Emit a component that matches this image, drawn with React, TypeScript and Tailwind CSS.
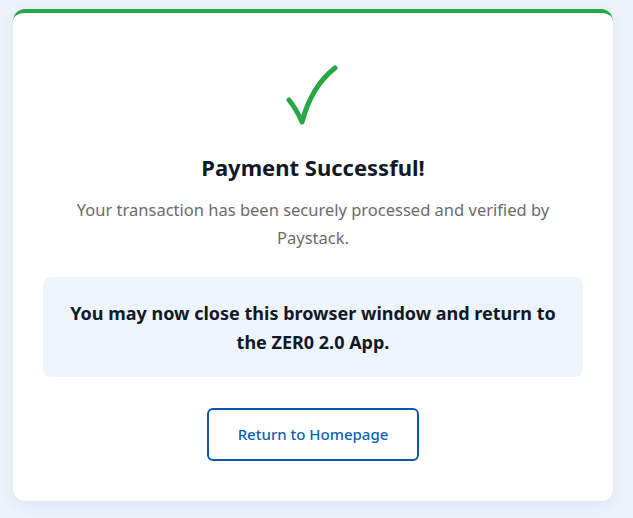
import React from 'react';

const CheckMark: React.FC = () => (
    <svg width="54" height="62" viewBox="0 0 54 62" fill="none" className="block">
        <path
            d="M3 35 C8 41 12 48 16 57 C21 38 31 17 49 3"
            stroke="#28a745"
            strokeWidth="5"
            strokeLinecap="round"
            strokeLinejoin="round"
        />
    </svg>
);

export default function App() {
    return (
        <div className="min-h-[518px] bg-[#edf3fb] pt-[9px] pl-[13px]" style={{ fontFamily: '"Noto Sans", "Open Sans", sans-serif' }}>
            <div className="w-[600px] bg-white rounded-xl border-t-4 border-[#28a745] shadow-[0_4px_14px_rgba(30,60,120,0.08)] px-[30px] pt-[52px] pb-[40px] flex flex-col items-center text-center">
                <CheckMark />
                <h1 className="mt-[25px] text-[22px] leading-[30px] font-bold text-[#111827]">Payment Successful!</h1>
                <p className="mt-[14px] max-w-[500px] text-[16.5px] leading-[28px] text-[#6b6b6b]">
                    Your transaction has been securely processed and verified by Paystack.
                </p>
                <div className="mt-[25px] w-full rounded-lg bg-[#edf4fc] px-[24px] pt-[22px] pb-[20px]">
                    <p className="text-[18px] leading-[29px] font-bold text-[#111827]">
                        You may now close this browser window and return to the ZER0 2.0 App.
                    </p>
                </div>
                <button className="mt-[31px] h-[53px] px-[29px] rounded-md border-2 border-[#0b57ad] bg-white text-[15px] font-medium text-[#0d5fb8]">
                    Return to Homepage
                </button>
            </div>
        </div>
    );
}
